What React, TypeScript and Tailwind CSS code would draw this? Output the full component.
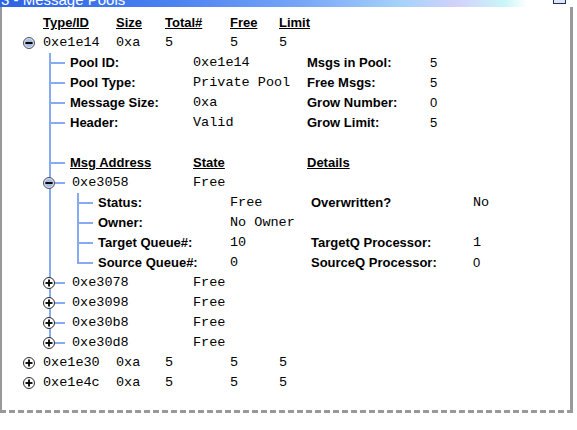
import React from 'react'

const mono = "font-['Liberation_Mono','Courier_New',monospace] text-[13.5px] font-normal"
const bold = "font-['Liberation_Sans',Arial,sans-serif] font-bold text-[13px]"
const sans = "font-['Liberation_Sans',Arial,sans-serif] text-[13px]"
const line = 'border-[#86abf2]'

const Expander = ({ open }: { open?: boolean }) =>
  open ? (
    <svg width="12" height="12" viewBox="0 0 12 12" className="shrink-0">
      <circle cx="6" cy="6" r="5.5" fill="#dfe6f2" stroke="#4a4f5a" />
      <circle cx="6" cy="6" r="3.9" fill="#a9bde3" />
      <rect x="2.4" y="5" width="7.2" height="2" fill="#000" />
    </svg>
  ) : (
    <svg width="12" height="12" viewBox="0 0 12 12" className="shrink-0">
      <circle cx="6" cy="6" r="5.5" fill="#fff" stroke="#2a2a2a" />
      <rect x="2.5" y="5.1" width="7" height="1.8" fill="#000" />
      <rect x="5.1" y="2.5" width="1.8" height="7" fill="#000" />
    </svg>
  )

// L-shaped connector of the tree, drawn in flow
const Branch = ({ last, blank }: { last?: boolean; blank?: boolean }) => (
  <div className="flex w-[16px] shrink-0 flex-col">
    <div className={`h-[11px] border-l-2 ${blank ? '' : 'border-b-2'} ${line}`} />
    {!last && <div className={`flex-1 border-l-2 ${line}`} />}
  </div>
)

const Child = ({ last, blank, children }: { last?: boolean; blank?: boolean; children?: React.ReactNode }) => (
  <div className="flex">
    <Branch last={last} blank={blank} />
    <div className="min-w-0 flex-1">{children}</div>
  </div>
)

const Row = ({ className = '', children }: { className?: string; children?: React.ReactNode }) => (
  <div className={`flex h-[20px] items-center whitespace-nowrap ${className}`}>{children}</div>
)

const PoolRow = ({ id, open }: { id: string; open?: boolean }) => (
  <Row className="pl-[21px]">
    <Expander open={open} />
    <span className={`ml-[8px] w-[73px] ${mono}`}>{id}</span>
    <span className={`w-[49px] ${mono}`}>0xa</span>
    <span className={`w-[65px] ${mono}`}>5</span>
    <span className={`w-[49px] ${mono}`}>5</span>
    <span className={mono}>5</span>
  </Row>
)

const poolDetails = [
  ['Pool ID:', '0xe1e14', 'Msgs in Pool:', '5'],
  ['Pool Type:', 'Private Pool', 'Free Msgs:', '5'],
  ['Message Size:', '0xa', 'Grow Number:', '0'],
  ['Header:', 'Valid', 'Grow Limit:', '5']
]

const msgDetails = [
  ['Status:', 'Free', 'Overwritten?', 'No', true],
  ['Owner:', 'No Owner', '', '', true],
  ['Target Queue#:', '10', 'TargetQ Processor:', '1', true],
  ['Source Queue#:', '0', 'SourceQ Processor:', '0', false]
] as const

const MsgRow = ({ addr, open }: { addr: string; open?: boolean }) => (
  <Row>
    <span className="ml-[-22px] flex">
      <Expander open={open} />
    </span>
    <span className={`ml-[17px] w-[121px] ${mono}`}>{addr}</span>
    <span className={mono}>Free</span>
  </Row>
)

export default function App() {
  return (
    <div className="h-[430px] w-[577px] overflow-hidden bg-white font-['Liberation_Sans',Arial,sans-serif] text-black">
      <div className="w-[573px]">
        <div className="flex h-[7px] overflow-hidden bg-[linear-gradient(90deg,#2c63e6_0%,#4a82f1_30%,#76a4f7_52%,#a6d2fa_70%,#d2d2fb_80%,#c9f6f8_88%,#ffffff_92%)]">
          <span className="mt-[-8px] pl-px text-[15px] leading-[15px] text-white">3 - Message Pools</span>
          <span className="ml-auto mr-[7px] h-[4px] w-[13px] border border-t-0 border-[#1f2f6a] bg-[#dfe6f4]" />
        </div>
        <div className="h-[406px] border-b-[3px] border-l-2 border-r-[3px] border-[#999] pt-[6px] [border-bottom-style:dashed]">
          <Row className={`pl-[41px] ${bold}`}>
            <span className="w-[73px] underline">Type/ID</span>
            <span className="w-[49px] underline">Size</span>
            <span className="w-[65px] underline">Total#</span>
            <span className="w-[49px] underline">Free</span>
            <span className="underline">Limit</span>
          </Row>
          <PoolRow id="0xe1e14" open />
          <div className="ml-[47px]">
            {poolDetails.map(([a, b, c, d]) => (
              <Child key={a}>
                <Row className="pl-[5px]">
                  <span className={`w-[123px] ${bold}`}>{a}</span>
                  <span className={`w-[114px] ${mono}`}>{b}</span>
                  <span className={`w-[123px] ${bold}`}>{c}</span>
                  <span className={sans}>{d}</span>
                </Row>
              </Child>
            ))}
            <Child blank>
              <Row />
            </Child>
            <Child>
              <Row className={`pl-[5px] ${bold}`}>
                <span className="w-[123px]">
                  <span className="underline">Msg Address</span>
                </span>
                <span className="w-[114px]">
                  <span className="underline">State</span>
                </span>
                <span className="underline">Details</span>
              </Row>
            </Child>
            <Child>
              <MsgRow addr="0xe3058" open />
              <div className="ml-[12px]">
                {msgDetails.map(([a, b, c, d, notLast]) => (
                  <Child key={a} last={!notLast}>
                    <Row className="pl-[5px]">
                      <span className={`w-[132px] ${bold}`}>{a}</span>
                      <span className={`w-[81px] ${mono}`}>{b}</span>
                      <span className={`w-[162px] ${bold}`}>{c}</span>
                      <span className={d === '0' ? sans : mono}>{d}</span>
                    </Row>
                  </Child>
                ))}
              </div>
            </Child>
            <Child>
              <MsgRow addr="0xe3078" />
            </Child>
            <Child>
              <MsgRow addr="0xe3098" />
            </Child>
            <Child>
              <MsgRow addr="0xe30b8" />
            </Child>
            <Child last>
              <MsgRow addr="0xe30d8" />
            </Child>
          </div>
          <PoolRow id="0xe1e30" />
          <PoolRow id="0xe1e4c" />
        </div>
      </div>
    </div>
  )
}
